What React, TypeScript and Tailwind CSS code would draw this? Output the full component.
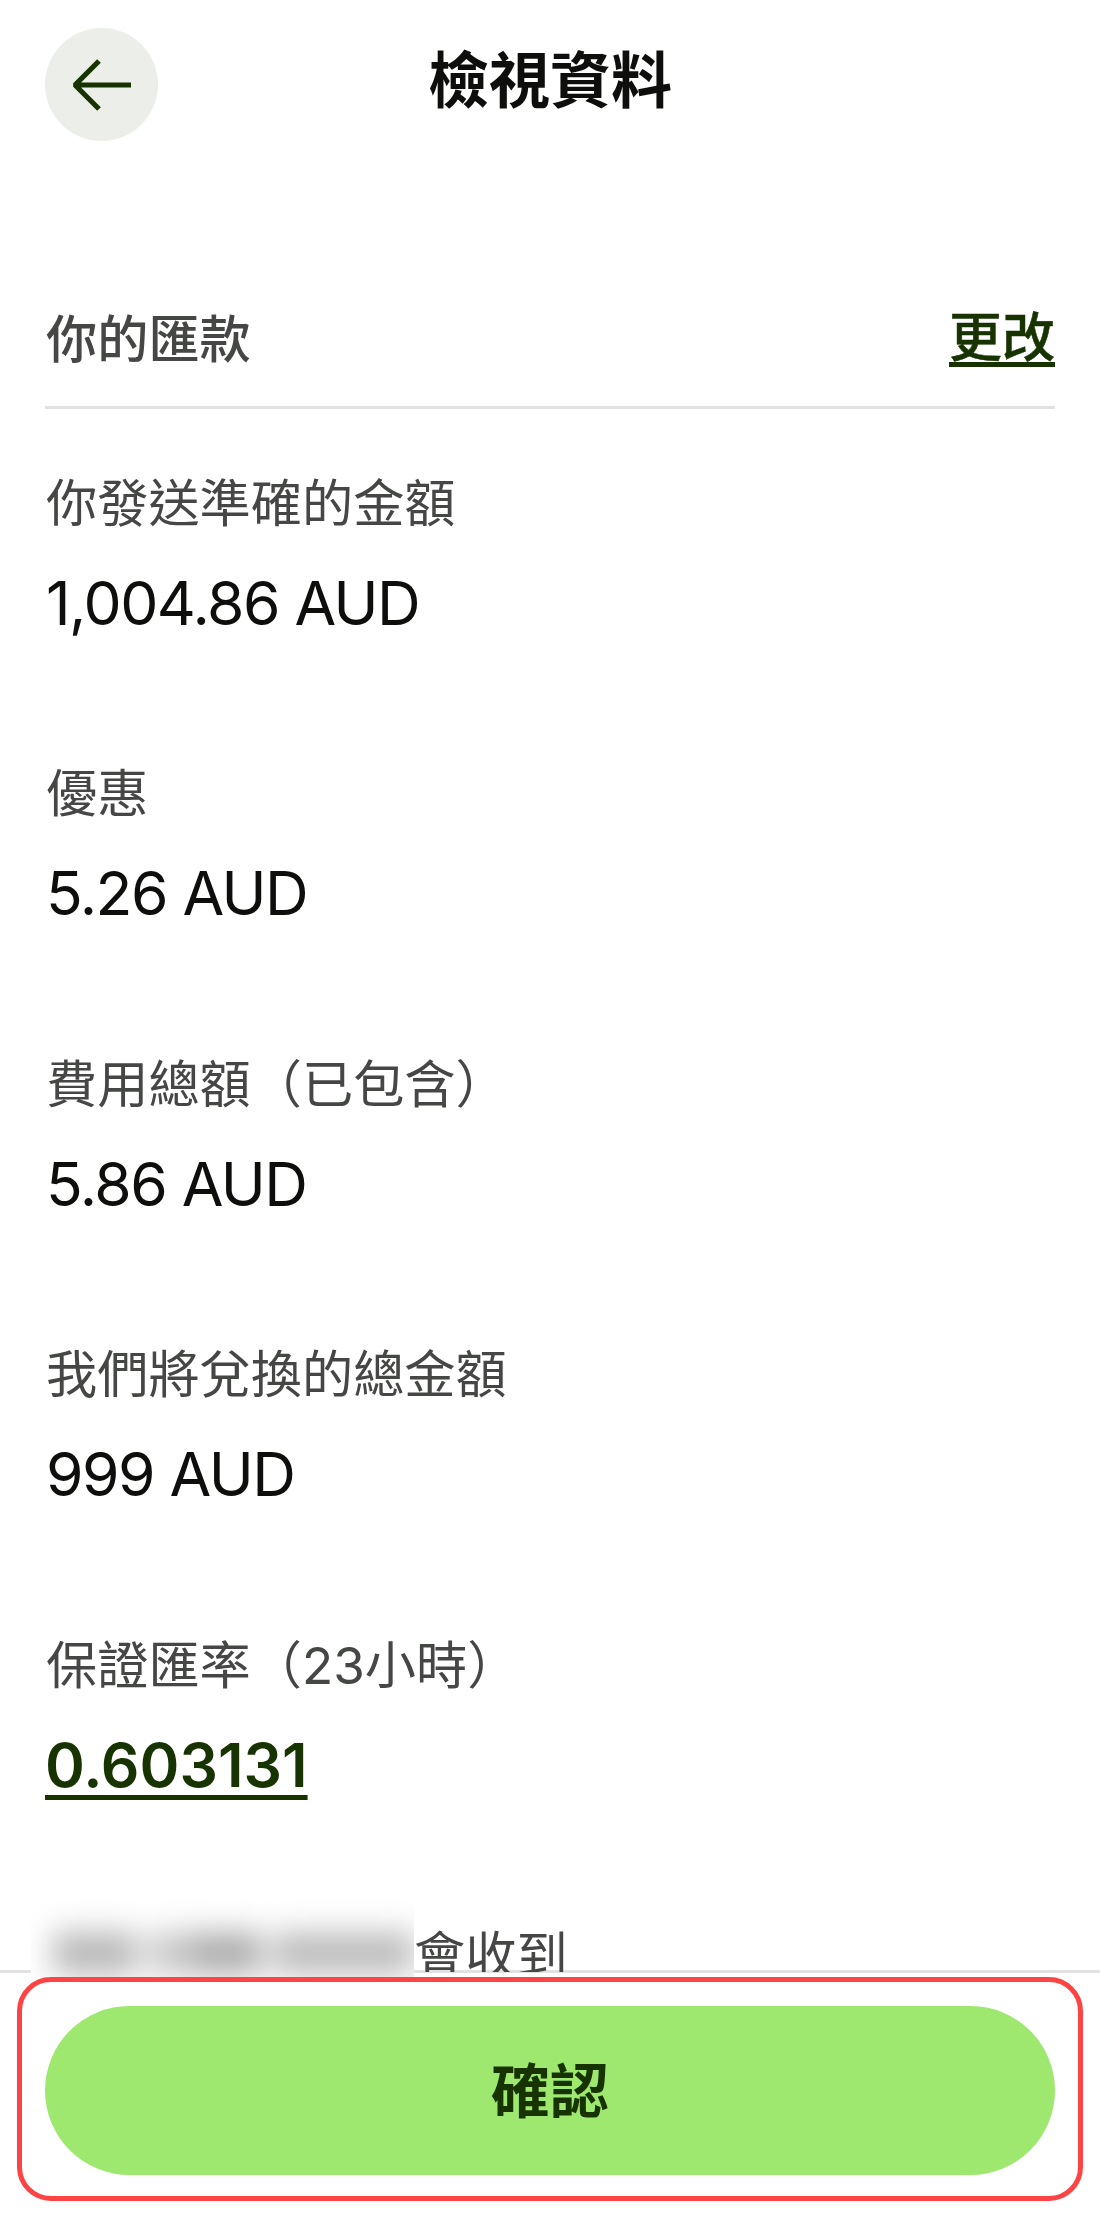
interface DetailItem {
  label: string;
  value: string;
  isLink?: boolean;
}

const DETAILS: DetailItem[] = [
  { label: "你發送準確的金額", value: "1,004.86 AUD" },
  { label: "優惠", value: "5.26 AUD" },
  { label: "費用總額（已包含）", value: "5.86 AUD" },
  { label: "我們將兌換的總金額", value: "999 AUD" },
  { label: "保證匯率（23小時）", value: "0.603131", isLink: true },
];

function DetailRow({ label, value, isLink }: DetailItem) {
  return (
    <div className="h-[290.4px]">
      <dt className="h-[76px] pl-px text-[51.2px] leading-[76px] text-[#454745]">{label}</dt>
      <dd className="mt-[24px] h-[76px] text-[60.5px] leading-[76px]">
        {isLink ? (
          <a
            href="#rate"
            className="font-semibold text-[#163300] underline decoration-[5px] underline-offset-[8px]"
          >
            {value}
          </a>
        ) : (
          <span className="pl-px tracking-[-1.5px] text-[#0e0f0c]">{value}</span>
        )}
      </dd>
    </div>
  );
}

export default function App() {
  return (
    <div className="flex h-[2221px] w-[1100px] flex-col overflow-hidden bg-white font-['Inter','Noto_Sans_CJK_TC',sans-serif]">
      <header className="grid h-[170px] shrink-0 grid-cols-[113px_1fr_113px] px-[45px] pt-[28px]">
        <button
          aria-label="返回"
          className="flex h-[113px] w-[113px] items-center justify-center rounded-full bg-[#eceeea]"
        >
          <svg width="60" height="52" viewBox="0 0 60 52" fill="none" stroke="#163300" strokeWidth="5.2" strokeLinejoin="bevel">
            <path d="M59 26H4M27 2L3 26l24 24" />
          </svg>
        </button>
        <h1 className="h-[106px] text-center text-[61px] leading-[106px] font-bold text-[#0e0f0c]">
          檢視資料
        </h1>
      </header>

      <main className="h-[1800px] shrink-0 px-[45px] pt-[131px]">
        <div className="flex h-[108px] justify-between border-b-[3px] border-[#e1e2e1] text-[51.2px] leading-[76px]">
          <h2 className="pl-px font-medium text-[#454745]">你的匯款</h2>
          <a
            href="#edit"
            className="text-[53px] leading-[75px] font-medium text-[#163300] underline decoration-[5px] underline-offset-[5px] [-webkit-text-stroke:0.5px_#163300] [text-decoration-skip-ink:none]"
          >
            更改
          </a>
        </div>
        <dl className="pt-[56px]">
          {DETAILS.map((item) => (
            <DetailRow key={item.label} {...item} />
          ))}
        </dl>
        <div className="flex items-start text-[51.2px] leading-[76px] text-[#454745]">
          {/* Recipient name is redacted */}
          <div className="relative z-10 -mt-[18px] -ml-[14px] h-[78px] w-[383px] overflow-hidden bg-white">
            <div className="mt-[33px] flex h-[42px] gap-[12px] pl-[22px] blur-[15px]">
              <div className="w-[98px] bg-[#b8b8b8]" />
              <div className="w-[50px] bg-[#c8c8c8]" />
              <div className="-ml-[12px] w-[82px] bg-[#adadad]" />
              <div className="w-[140px] shrink-0 bg-[#bcbcbc]" />
            </div>
          </div>
          <span className="relative h-[55px] overflow-hidden">會收到</span>
        </div>
      </main>

      <footer className="h-[251px] shrink-0 border-t-[3px] border-[#e1e2e1] px-[17px] pt-[4px]">
        <div className="relative z-20 h-[224px] rounded-[34px] border-[5px] border-[#fd4444] px-[23px] pt-[24px]">
          <button className="h-[169px] w-full rounded-full bg-[#9fe870] pt-[3px] text-[59px] font-bold text-[#163300]">
            確認
          </button>
        </div>
      </footer>
    </div>
  );
}
